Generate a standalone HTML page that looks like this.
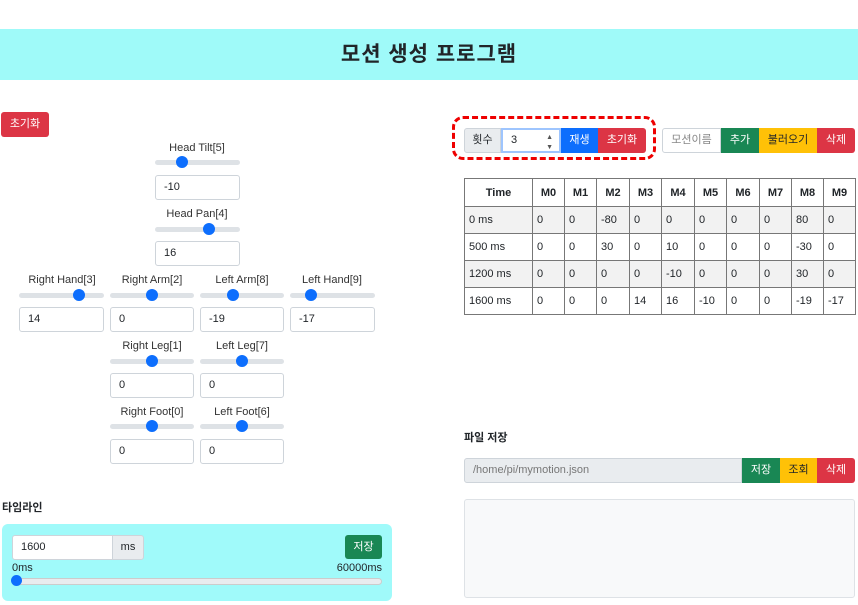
<!DOCTYPE html>
<html><head><meta charset="utf-8"><style>
*{box-sizing:border-box;margin:0;padding:0}
body{width:858px;height:605px;overflow:hidden;background:#fff;font-family:"Liberation Sans","Noto Sans CJK KR",sans-serif;font-size:11px;color:#212529;position:relative}
.a{position:absolute}
.band{left:0;top:29px;width:858px;height:51px;background:#9ffaf9;text-align:center;line-height:51px;font-size:21px;font-weight:bold;letter-spacing:1px}
.btn{position:absolute;color:#fff;text-align:center;font-size:11px;line-height:25px;height:25px}
.red{background:#dc3545}.green{background:#198754}.blue{background:#0d6efd}.yellow{background:#ffc107;color:#212529}
.lbl{position:absolute;text-align:center;width:86px;font-size:11px;color:#333}
.tr{position:absolute;height:5px;background:#dee2e6;border-radius:3px}
.th{position:absolute;width:12px;height:12px;border-radius:50%;background:#0d6efd;top:-4px;margin-left:-6px}
.in{position:absolute;height:25px;border:1px solid #ced4da;border-radius:3px;background:#fff;padding-left:8px;line-height:23px;font-size:11px}
table{position:absolute;left:464px;top:178px;border-collapse:collapse;font-size:11px}
td,th{border:1px solid #777;height:27px;padding:0 4px;text-align:left;font-weight:normal}
th{font-weight:bold;text-align:center;height:28px}
tr.o td{background:#f2f2f2}
</style></head><body>
<div class="a band">모션 생성 프로그램</div>
<div class="btn red" style="left:1px;top:112px;width:48px;border-radius:3px">초기화</div>

<div class="lbl" style="left:154px;top:142px">Head Tilt[5]</div>
<div class="tr" style="left:155px;top:160px;width:85px"><div class="th" style="left:27px"></div></div>
<div class="in" style="left:155px;top:175px;width:85px">-10</div>
<div class="lbl" style="left:154px;top:208px">Head Pan[4]</div>
<div class="tr" style="left:155px;top:227px;width:85px"><div class="th" style="left:54px"></div></div>
<div class="in" style="left:155px;top:241px;width:85px">16</div>

<div class="lbl" style="left:19px;top:274px">Right Hand[3]</div>
<div class="lbl" style="left:109px;top:274px">Right Arm[2]</div>
<div class="lbl" style="left:199px;top:274px">Left Arm[8]</div>
<div class="lbl" style="left:289px;top:274px">Left Hand[9]</div>
<div class="tr" style="left:19px;top:293px;width:85px"><div class="th" style="left:60px"></div></div>
<div class="tr" style="left:110px;top:293px;width:84px"><div class="th" style="left:42px"></div></div>
<div class="tr" style="left:200px;top:293px;width:84px"><div class="th" style="left:33px"></div></div>
<div class="tr" style="left:290px;top:293px;width:85px"><div class="th" style="left:21px"></div></div>
<div class="in" style="left:19px;top:307px;width:85px">14</div>
<div class="in" style="left:110px;top:307px;width:84px">0</div>
<div class="in" style="left:200px;top:307px;width:84px">-19</div>
<div class="in" style="left:290px;top:307px;width:85px">-17</div>

<div class="lbl" style="left:109px;top:340px">Right Leg[1]</div>
<div class="lbl" style="left:199px;top:340px">Left Leg[7]</div>
<div class="tr" style="left:110px;top:359px;width:84px"><div class="th" style="left:42px"></div></div>
<div class="tr" style="left:200px;top:359px;width:84px"><div class="th" style="left:42px"></div></div>
<div class="in" style="left:110px;top:373px;width:84px">0</div>
<div class="in" style="left:200px;top:373px;width:84px">0</div>

<div class="lbl" style="left:109px;top:406px">Right Foot[0]</div>
<div class="lbl" style="left:199px;top:406px">Left Foot[6]</div>
<div class="tr" style="left:110px;top:424px;width:84px"><div class="th" style="left:42px"></div></div>
<div class="tr" style="left:200px;top:424px;width:84px"><div class="th" style="left:42px"></div></div>
<div class="in" style="left:110px;top:439px;width:84px">0</div>
<div class="in" style="left:200px;top:439px;width:84px">0</div>

<div class="a" style="left:2px;top:499px;font-weight:bold;font-size:11px">타임라인</div>
<div class="a" style="left:2px;top:524px;width:390px;height:77px;background:#a0fafa;border-radius:6px">
 <div class="in" style="left:10px;top:11px;width:101px;border-radius:3px 0 0 3px">1600</div>
 <div class="a" style="left:110px;top:11px;width:32px;height:25px;background:#e9ecef;border:1px solid #ced4da;border-radius:0 3px 3px 0;text-align:center;line-height:23px">ms</div>
 <div class="btn green" style="left:343px;top:11px;width:37px;height:24px;line-height:24px;border-radius:3px">저장</div>
 <div class="a" style="left:10px;top:38px">0ms</div>
 <div class="a" style="right:10px;top:38px">60000ms</div>
 <div class="tr" style="left:10px;top:54px;width:370px;height:7px;border:1px solid #ccc;background:#e9ecef;border-radius:4px"><div class="th" style="left:4px;top:-4px;width:11px;height:11px"></div></div>
</div>

<div class="a" style="left:452px;top:116px;width:204px;height:44px;border:3px dashed #e00;border-radius:11px"></div>
<div class="a" style="left:464px;top:128px;width:37px;height:25px;background:#e9ecef;border:1px solid #ced4da;border-radius:3px 0 0 3px;text-align:center;line-height:23px">횟수</div>
<div class="a" style="left:501px;top:128px;width:60px;height:25px;border:2px solid #9ec5fe;background:#fff;padding-left:8px;line-height:21px">3<span style="position:absolute;right:6px;font-size:7px;color:#555;line-height:10px;top:3px">▲<br>▼</span></div>
<div class="btn blue" style="left:561px;top:128px;width:37px">재생</div>
<div class="btn red" style="left:598px;top:128px;width:48px;border-radius:0 3px 3px 0">초기화</div>

<div class="a" style="left:662px;top:128px;width:59px;height:25px;border:1px solid #ced4da;border-radius:3px 0 0 3px;color:#888;text-align:center;line-height:23px">모션이름</div>
<div class="btn green" style="left:721px;top:128px;width:38px">추가</div>
<div class="btn yellow" style="left:759px;top:128px;width:58px">불러오기</div>
<div class="btn red" style="left:817px;top:128px;width:38px;border-radius:0 3px 3px 0">삭제</div>

<table>
<tr><th style="width:68px">Time</th><th style="width:32px">M0</th><th style="width:32px">M1</th><th style="width:33px">M2</th><th style="width:32px">M3</th><th style="width:33px">M4</th><th style="width:32px">M5</th><th style="width:33px">M6</th><th style="width:32px">M7</th><th style="width:32px">M8</th><th style="width:32px">M9</th></tr>
<tr class="o"><td>0 ms</td><td>0</td><td>0</td><td>-80</td><td>0</td><td>0</td><td>0</td><td>0</td><td>0</td><td>80</td><td>0</td></tr>
<tr><td>500 ms</td><td>0</td><td>0</td><td>30</td><td>0</td><td>10</td><td>0</td><td>0</td><td>0</td><td>-30</td><td>0</td></tr>
<tr class="o"><td>1200 ms</td><td>0</td><td>0</td><td>0</td><td>0</td><td>-10</td><td>0</td><td>0</td><td>0</td><td>30</td><td>0</td></tr>
<tr><td>1600 ms</td><td>0</td><td>0</td><td>0</td><td>14</td><td>16</td><td>-10</td><td>0</td><td>0</td><td>-19</td><td>-17</td></tr>
</table>

<div class="a" style="left:464px;top:429px;font-weight:bold">파일 저장</div>
<div class="a" style="left:464px;top:458px;width:278px;height:25px;background:#e9ecef;border:1px solid #ced4da;border-radius:3px 0 0 3px;color:#777;padding-left:8px;line-height:23px">/home/pi/mymotion.json</div>
<div class="btn green" style="left:742px;top:458px;width:38px">저장</div>
<div class="btn yellow" style="left:780px;top:458px;width:37px">조회</div>
<div class="btn red" style="left:817px;top:458px;width:38px;border-radius:0 3px 3px 0">삭제</div>
<div class="a" style="left:464px;top:499px;width:391px;height:99px;background:#f8f9fa;border:1px solid #dee2e6;border-radius:3px"></div>
</body></html>
